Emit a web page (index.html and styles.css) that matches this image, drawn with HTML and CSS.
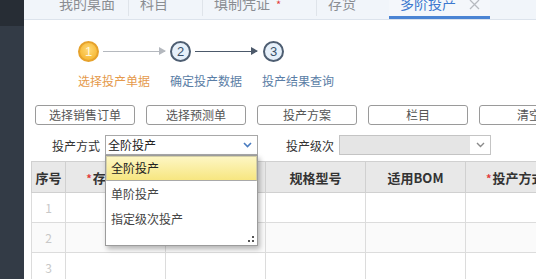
FILE: index.html
```html
<!DOCTYPE html>
<html lang="zh-CN">
<head>
<meta charset="utf-8">
<title>多阶投产</title>
<link rel="stylesheet" href="styles.css">
</head>
<body>
<div class="app">
  <aside class="sidebar"><div class="sidebar-top"></div></aside>
  <main class="main">
    <nav class="tabs">
      <div class="tab tab-desk">我的桌面</div>
      <div class="tab tab-subject">科目</div>
      <div class="tab tab-voucher">填制凭证<span class="req">*</span></div>
      <div class="tab tab-stock">存货</div>
      <div class="tab tab-active">多阶投产<svg class="tab-close" width="11" height="11" viewBox="0 0 11 11"><path d="M1 1L10 10M10 1L1 10" stroke="#b6bac0" stroke-width="1.3" fill="none"/></svg></div>
    </nav>

    <div class="steps">
      <div class="step-dot step-dot-current">1</div>
      <div class="step-line step-line-light"></div>
      <div class="step-dot">2</div>
      <div class="step-line step-line-dark"></div>
      <div class="step-dot">3</div>
    </div>
    <div class="step-labels">
      <div class="step-label step-label-current">选择投产单据</div>
      <div class="step-label">确定投产数据</div>
      <div class="step-label">投产结果查询</div>
    </div>

    <div class="toolbar">
      <button class="btn">选择销售订单</button>
      <button class="btn">选择预测单</button>
      <button class="btn">投产方案</button>
      <button class="btn">栏目</button>
      <button class="btn">清空</button>
    </div>

    <div class="filters">
      <span class="filter-label">投产方式</span>
      <div class="select-wrap">
        <div class="select select-open">
          <span class="select-text">全阶投产</span>
          <svg class="chev chev-blue" width="9" height="6" viewBox="0 0 9 6"><polyline points="1,1 4.5,4.5 8,1" fill="none" stroke="currentColor" stroke-width="1.6"/></svg>
        </div>
        <ul class="dropdown">
          <li class="dd-item dd-item-active">全阶投产</li>
          <li class="dd-item">单阶投产</li>
          <li class="dd-item">指定级次投产</li>
          <svg class="grip" width="7" height="7" viewBox="0 0 7 7"><rect x="5" y="1" width="2" height="2" fill="#555"/><rect x="1" y="5" width="2" height="2" fill="#555"/><rect x="5" y="5" width="2" height="2" fill="#555"/></svg>
        </ul>
      </div>
      <span class="filter-label filter-label-2">投产级次</span>
      <div class="select select-disabled">
        <span class="select-fill"></span>
        <span class="select-btn">
          <svg class="chev chev-gray" width="9" height="6" viewBox="0 0 9 6"><polyline points="1,1 4.5,4.5 8,1" fill="none" stroke="currentColor" stroke-width="1.4"/></svg>
        </span>
      </div>
    </div>

    <div class="table-wrap">
      <table class="grid">
        <colgroup>
          <col class="c-no"><col class="c-w"><col class="c-w"><col class="c-w"><col class="c-w"><col class="c-w">
        </colgroup>
        <thead>
          <tr>
            <th>序号</th>
            <th><span class="req">*</span>存货编码</th>
            <th>存货名称</th>
            <th>规格型号</th>
            <th>适用BOM</th>
            <th class="th-left"><span class="req">*</span>投产方式</th>
          </tr>
        </thead>
        <tbody>
          <tr><td class="no">1</td><td></td><td></td><td></td><td></td><td></td></tr>
          <tr class="alt"><td class="no">2</td><td></td><td></td><td></td><td></td><td></td></tr>
          <tr><td class="no">3</td><td></td><td></td><td></td><td></td><td></td></tr>
        </tbody>
      </table>
    </div>
  </main>
</div>
</body>
</html>
```

FILE: styles.css
```css
* { box-sizing: border-box; }
html, body { margin: 0; padding: 0; }
body {
  font-family: "Noto Sans CJK SC", "Noto Sans", "Liberation Sans", sans-serif;
  font-size: 12px;
  color: #333;
  background: #fff;
}
.app {
  display: flex;
  width: 536px;
  height: 279px;
  overflow: hidden;
}
.sidebar {
  width: 24px;
  flex: 0 0 24px;
  background: #333b46;
}
.sidebar-top {
  height: 26px;
  background: #272d35;
}
.main {
  flex: 1;
  min-width: 0;
  overflow: hidden;
  position: relative;
}

/* tabs */
.tabs {
  display: flex;
  height: 20px;
  background: #f1f5fa;
  border-bottom: 1px solid #dce3ec;
  padding-left: 24px;
  overflow: visible;
}
.tab {
  margin-top: -4px;
  height: 20px;
  line-height: 14px;
  font-size: 14px;
  color: #8a8d92;
  padding-left: 11px;
  border-right: 1px solid #dfe4ea;
  white-space: nowrap;
}
.tab-desk { width: 81px; }
.tab-subject { width: 74px; }
.tab-voucher { width: 114px; }
.tab-stock { width: 72px; border-right: none; }
.tab-active {
  display: flex;
  align-items: flex-start;
  width: 101px;
  height: 23px;
  border-right: none;
  border-bottom: 3px solid #4a84d4;
  color: #3c78cf;
  background: #f4f7fb;
}
.tab-close {
  display: block;
  margin-left: 13px;
  margin-top: 3px;
}
.req { color: #e33b3b; font-size: 11px; margin-right: 1px; }
.tab .req { margin-left: 6px; }

/* steps */
.steps {
  display: flex;
  align-items: center;
  margin-top: 21px;
  padding-left: 54px;
  height: 21px;
}
.step-dot {
  width: 21px;
  height: 21px;
  border-radius: 50%;
  border: 2px solid #4e5e72;
  background: #e6f0fa;
  color: #3b5069;
  font-size: 13px;
  line-height: 17px;
  text-align: center;
  font-family: "Liberation Sans", sans-serif;
}
.step-dot-current {
  border-color: #e6a22c;
  background: radial-gradient(circle at 50% 40%, #ffd977 0%, #f7bb3a 70%, #eea524 100%);
  color: #fff7dc;
}
.step-line {
  position: relative;
  width: 62px;
  height: 1px;
  margin: 0 5px 0 4px;
}
.step-line::after {
  content: "";
  position: absolute;
  right: -1px;
  top: -4px;
  border-left: 7px solid;
  border-top: 4.5px solid transparent;
  border-bottom: 4.5px solid transparent;
}
.step-line-light { background: #b4b8be; }
.step-line-light::after { border-left-color: #b4b8be; }
.step-line-dark { background: #4c596a; margin-right: 6px; }
.step-line-dark::after { border-left-color: #4c596a; }

.step-labels {
  display: flex;
  gap: 20px;
  margin-top: 11px;
  padding-left: 54px;
  line-height: 16px;
}
.step-label {
  width: 72px;
  white-space: nowrap;
  color: #5b7ea6;
  font-size: 12px;
}
.step-label-current { color: #e59a4c; }

/* toolbar */
.toolbar {
  display: flex;
  gap: 11px;
  margin-top: 16px;
  padding-left: 11px;
}
.btn {
  flex: 0 0 100px;
  width: 100px;
  height: 20px;
  padding: 0;
  border: 1px solid #9a9a9a;
  border-radius: 3px;
  background: #fff;
  color: #555;
  font-family: inherit;
  font-size: 12px;
  line-height: 18px;
  text-align: center;
}

/* filters */
.filters {
  display: flex;
  align-items: center;
  margin-top: 10px;
  padding-left: 28px;
  height: 20px;
}
.filter-label {
  color: #333;
  margin-right: 5px;
  white-space: nowrap;
}
.filter-label-2 { margin-left: 28px; margin-right: 5px; }
.select-wrap {
  position: relative;
  width: 153px;
  height: 20px;
}
.select {
  display: flex;
  align-items: center;
  width: 153px;
  height: 20px;
  border: 1px solid #a8a8a8;
  background: #fff;
}
.select-open { padding: 0 5px 0 2px; justify-content: space-between; }
.select-text { line-height: 18px; color: #222; }
.chev { display: block; }
.chev-blue { color: #4a7cc0; }
.chev-gray { color: #8a8a8a; }
.select-disabled { width: 152px; border-color: #c4c4c4; }
.select-fill {
  flex: 1;
  height: 100%;
  background: #e5e5e5;
}
.select-btn {
  width: 20px;
  height: 100%;
  display: flex;
  align-items: center;
  justify-content: center;
  background: #fff;
}

/* dropdown */
.dropdown {
  position: absolute;
  left: 0;
  top: 20px;
  width: 153px;
  height: 91px;
  margin: 0;
  padding: 0;
  list-style: none;
  background: #fff;
  border: 1px solid #9c9c9c;
  box-shadow: 2px 3px 5px rgba(0, 0, 0, 0.28);
  z-index: 5;
}
.dd-item {
  height: 25px;
  line-height: 24px;
  padding-left: 5px;
  color: #444;
  white-space: nowrap;
}
.dd-item-active {
  height: 25px;
  background: linear-gradient(#fdf6c3, #f7e680);
  border: 1px solid #d4cfa6;
  border-bottom-color: #a9a9a9;
  line-height: 22px;
  padding-left: 4px;
  color: #222;
  margin-bottom: 1px;
}
.grip {
  position: absolute;
  right: 3px;
  bottom: 3px;
}

/* table */
.table-wrap {
  margin-top: 6px;
  margin-left: 7px;
  width: 700px;
}
.grid {
  border-collapse: collapse;
  table-layout: fixed;
  width: 534px;
  border: 1px solid #cfcfcf;
}
.c-no { width: 34px; }
.c-w { width: 100px; }
.grid th {
  height: 31px;
  background: #e8e8e8;
  border: 1px solid #d0d0d0;
  font-size: 13px;
  font-weight: bold;
  color: #333;
  text-align: center;
  white-space: nowrap;
  overflow: hidden;
  padding: 0;
}
.grid th.th-left { text-align: left; padding-left: 20px; }
.grid td {
  height: 30px;
  border: 1px solid #dcdcdc;
  padding: 0;
}
.grid tr.alt td { background: #fafafa; }
.grid td.no {
  text-align: center;
  color: #c8c8c8;
  font-size: 12px;
}
```
